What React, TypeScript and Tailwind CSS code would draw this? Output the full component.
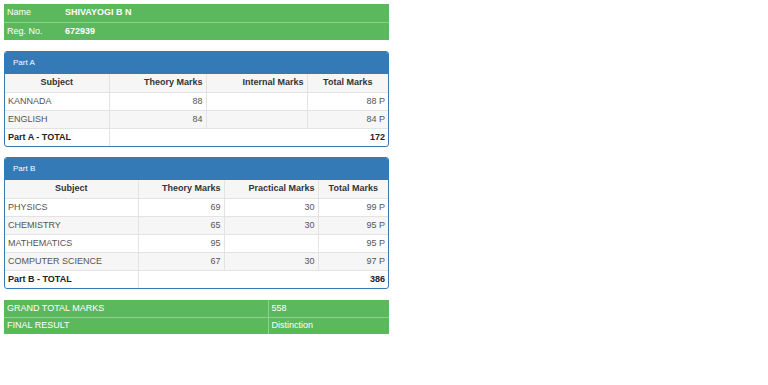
import React from "react";

const info = [
  { label: "Name", value: "SHIVAYOGI B N" },
  { label: "Reg. No.", value: "672939" },
];

const partA = {
  title: "Part A",
  cols: ["Theory Marks", "Internal Marks"],
  widths: ["w-[104px]", "w-[97px]", "w-[101px]", ""],
  rows: [
    ["KANNADA", "88", "", "88 P"],
    ["ENGLISH", "84", "", "84 P"],
  ],
  total: "172",
};

const partB = {
  title: "Part B",
  cols: ["Theory Marks", "Practical Marks"],
  widths: ["w-[133px]", "w-[86px]", "w-[94px]", ""],
  rows: [
    ["PHYSICS", "69", "30", "99 P"],
    ["CHEMISTRY", "65", "30", "95 P"],
    ["MATHEMATICS", "95", "", "95 P"],
    ["COMPUTER SCIENCE", "67", "30", "97 P"],
  ],
  total: "386",
};

type Part = typeof partA;

const cell = "h-[18px] px-[3px] py-0 border border-[#e3e3e3] leading-[17px]";

const PartPanel = ({ part }: { part: Part }) => {
  return (
    <div className="border border-[#337ab7] rounded-[3px] overflow-hidden bg-white">
      <div className="h-[22px] bg-[#337ab7] text-white text-[8px] pl-[8px] flex items-center">
        {part.title}
      </div>
      <table className="w-full border-collapse border-hidden text-[9px] table-fixed">
        <colgroup>
          {part.widths.map((w, i) => (
            <col key={i} className={w} />
          ))}
        </colgroup>
        <tbody>
          <tr className="bg-[#f6f6f6] font-bold text-[#333]">
            <td className={`${cell} text-center`}>Subject</td>
            <td className={`${cell} text-right`}>{part.cols[0]}</td>
            <td className={`${cell} text-right`}>{part.cols[1]}</td>
            <td className={`${cell} text-center`}>Total Marks</td>
          </tr>
          {part.rows.map((r, i) => (
            <tr key={r[0]} className={i % 2 === 1 ? "bg-[#f6f6f6] text-[#555]" : "text-[#555]"}>
              <td className={cell}>{r[0]}</td>
              <td className={`${cell} text-right`}>{r[1]}</td>
              <td className={`${cell} text-right`}>{r[2]}</td>
              <td className={`${cell} text-right`}>{r[3]}</td>
            </tr>
          ))}
          <tr
            className={`font-bold text-[#222] ${part.rows.length % 2 === 1 ? "bg-[#f6f6f6]" : ""}`}
          >
            <td className={cell}>{part.title} - TOTAL</td>
            <td colSpan={3} className={`${cell} text-right`}>
              {part.total}
            </td>
          </tr>
        </tbody>
      </table>
    </div>
  );
};

export default function App() {
  return (
    <div className="w-[768px] h-[385px] bg-white p-[4px] font-['Liberation_Sans',Arial,sans-serif]">
      <div className="w-[385px] flex flex-col">
        <table className="w-full border-collapse text-[9px] text-white bg-[#5cb85c]">
          <tbody>
            {info.map((r, i) => (
              <tr key={r.label} className={i > 0 ? "border-t border-[#8fd08f]" : ""}>
                <td className="w-[58px] h-[18px] px-[3px] py-0">{r.label}</td>
                <td className="h-[18px] px-[3px] py-0 font-bold">{r.value}</td>
              </tr>
            ))}
          </tbody>
        </table>

        <div className="mt-[11px]">
          <PartPanel part={partA} />
        </div>
        <div className="mt-[10px]">
          <PartPanel part={partB} />
        </div>

        <table className="mt-[11px] w-full border-collapse text-[9px] text-white bg-[#5cb85c]">
          <tbody>
            <tr>
              <td className="w-[264px] h-[17px] px-[3px] py-0 border-r border-[#8fd08f]">
                GRAND TOTAL MARKS
              </td>
              <td className="h-[17px] px-[3px] py-0">558</td>
            </tr>
            <tr className="border-t border-[#8fd08f]">
              <td className="h-[17px] px-[3px] py-0 border-r border-[#8fd08f]">FINAL RESULT</td>
              <td className="h-[17px] px-[3px] py-0">Distinction</td>
            </tr>
          </tbody>
        </table>
      </div>
    </div>
  );
}
